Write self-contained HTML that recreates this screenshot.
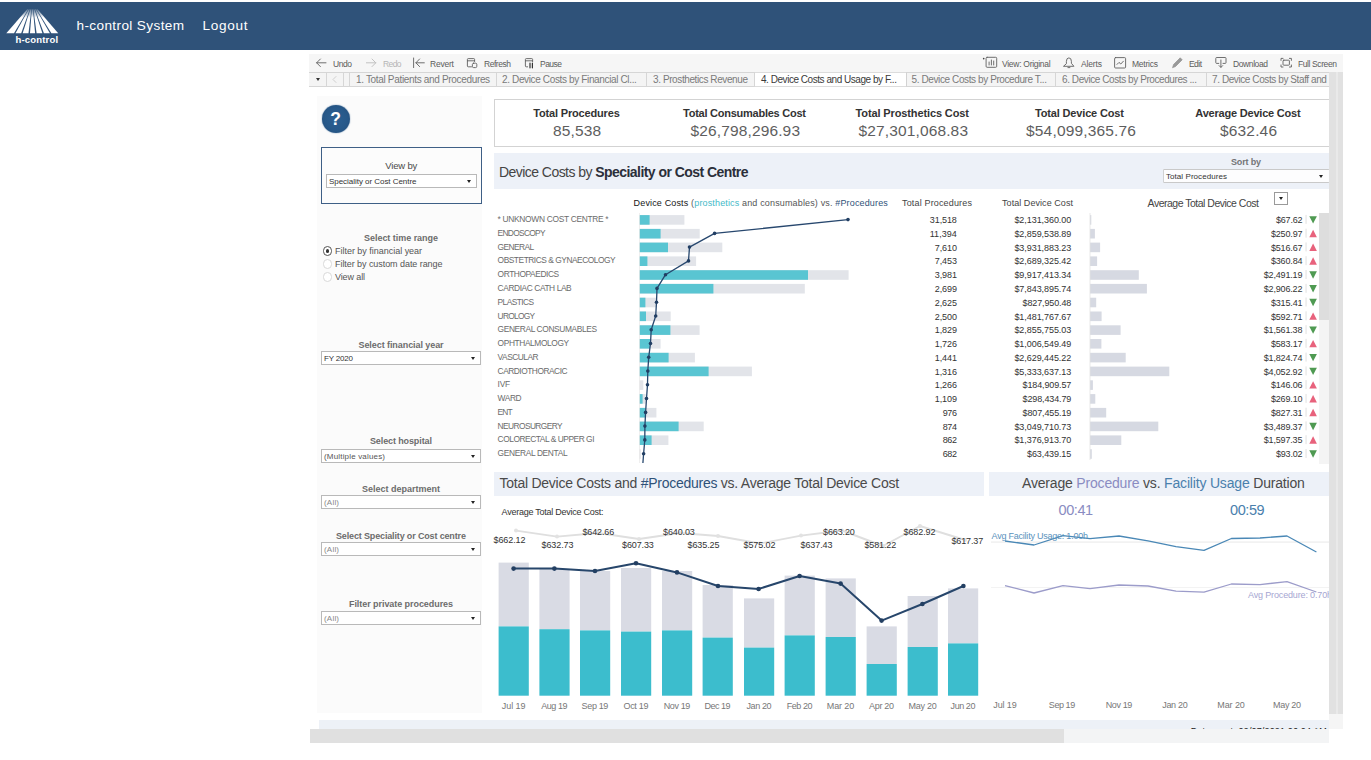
<!DOCTYPE html>
<html lang="en">
<head>
<meta charset="utf-8">
<title>h-control System</title>
<style>
html,body{margin:0;padding:0;background:#fff;}
body{width:1371px;height:760px;position:relative;overflow:hidden;font-family:"Liberation Sans",sans-serif;}
.a{position:absolute;box-sizing:border-box;}
.t{position:absolute;white-space:nowrap;line-height:1;transform:translateY(-50%);}
.t.c{transform:translate(-50%,-50%);}
.t.r{transform:translate(-100%,-50%);}
.sel{position:absolute;box-sizing:border-box;background:#fff;border:1px solid #b9b9b9;height:14px;}
.sel i{position:absolute;right:5px;top:5px;width:0;height:0;border-left:2.5px solid transparent;border-right:2.5px solid transparent;border-top:3.5px solid #222;}
.rad{position:absolute;box-sizing:border-box;width:9.6px;height:9.6px;border-radius:50%;border:1px solid #d9d9d9;background:#fff;}
.tab{position:absolute;box-sizing:border-box;top:72px;height:15px;background:#f4f4f4;border:1px solid #d6d6d6;border-left:none;}
svg{position:absolute;left:0;top:0;}
</style>
</head>
<body>
<!-- top navigation -->
<div class="a" style="left:0;top:2px;width:1371px;height:48px;background:#2f5279;"></div>
<svg width="70" height="50" viewBox="0 0 70 50">
  <defs>
    <linearGradient id="lg" x1="0" y1="0" x2="0" y2="1">
      <stop offset="0" stop-color="#fff" stop-opacity="0.25"/>
      <stop offset="0.35" stop-color="#fff" stop-opacity="1"/>
    </linearGradient>
  </defs>
  <g fill="url(#lg)"><path d="M27.20 9.3L28.25 9.3L14.0 33.2L6.3 33.2Z"/><path d="M28.75 9.3L29.80 9.3L21.2 33.2L15.5 33.2Z"/><path d="M30.30 9.3L31.35 9.3L28.5 33.2L22.7 33.2Z"/><path d="M31.85 9.3L32.90 9.3L35.1 33.2L30.0 33.2Z"/><path d="M33.40 9.3L34.45 9.3L42.4 33.2L36.6 33.2Z"/><path d="M34.95 9.3L36.00 9.3L49.9 33.2L43.9 33.2Z"/><path d="M36.50 9.3L37.55 9.3L58.2 33.2L51.4 33.2Z"/></g>
</svg>

<!-- tableau toolbar -->
<div class="a" style="left:309px;top:54px;width:1034px;height:18px;background:#f6f6f6;"></div>
<div class="a" style="left:309px;top:72px;width:1020px;height:15px;background:#fff;border-top:1px solid #dcdcdc;border-bottom:1px solid #dcdcdc;"></div>
<div class="tab" style="left:309px;width:18px;"></div>
<div class="tab" style="left:327px;width:17px;"></div>
<div class="tab" style="left:344px;width:6px;"></div>
<div class="tab" style="left:350px;width:147px;"></div>
<div class="tab" style="left:497px;width:150px;"></div>
<div class="tab" style="left:647px;width:108px;"></div>
<div class="tab" style="left:906px;width:150px;border-left:1px solid #d2d2d2;"></div>
<div class="tab" style="left:1056px;width:151px;"></div>
<div class="tab" style="left:1207px;width:122px;border-right:none;"></div>
<div class="a" style="left:315.5px;top:78px;width:0;height:0;border-left:2.5px solid transparent;border-right:2.5px solid transparent;border-top:3.5px solid #333;"></div>

<!-- dashboard frame -->
<div class="a" style="left:1329px;top:72px;width:14px;height:642px;background:#e1e1e1;z-index:5;"></div>
<div class="a" style="left:1335.5px;top:72px;width:2px;height:642px;background:#e9e9e9;z-index:6;"></div>
<div class="a" style="left:1329px;top:714px;width:14px;height:15px;background:#f5f5f5;"></div>
<div class="a" style="left:317px;top:96px;width:165px;height:617px;background:#fbfbfb;"></div>
<div class="a" style="left:321px;top:146.9px;width:161px;height:56.8px;border:1.4px solid #3e5f86;background:#fcfcfc;"></div>
<div class="a" style="left:321.5px;top:104.5px;width:28.5px;height:28.5px;border-radius:50%;background:radial-gradient(circle,#2b5f92 0%,#27598a 55%,#214b78 100%);box-shadow:0 0 1.2px #2a5a8a;"></div>

<div class="sel" style="left:326px;top:174.1px;width:150.8px;"><i></i></div>
<div class="sel" style="left:321.1px;top:351.0px;width:160px;"><i></i></div>
<div class="sel" style="left:321.1px;top:448.5px;width:160px;"><i></i></div>
<div class="sel" style="left:321.1px;top:495.0px;width:160px;"><i></i></div>
<div class="sel" style="left:321.1px;top:541.5px;width:160px;"><i></i></div>
<div class="sel" style="left:321.1px;top:610.5px;width:160px;"><i></i></div>
<div class="rad" style="left:322.5px;top:246.3px;border-color:#555;"></div>
<div class="a" style="left:325.6px;top:249.4px;width:3.8px;height:3.8px;border-radius:50%;background:#333;"></div>
<div class="rad" style="left:322.5px;top:259.4px;"></div>
<div class="rad" style="left:322.5px;top:272.4px;"></div>

<!-- KPI box -->
<div class="a" style="left:493.5px;top:99px;width:840px;height:48px;border:1px solid #d3d3d3;background:#fff;clip-path:inset(0 4.5px 0 0);"></div>
<!-- bands -->
<div class="a" style="left:493.5px;top:153px;width:835.5px;height:36px;background:#edf1f8;"></div>
<div class="sel" style="left:1163.4px;top:169.3px;width:170px;height:13.4px;clip-path:inset(0 4.5px 0 0);background:#fdfdfe;"><i style="right:9.5px;"></i></div>
<div class="a" style="left:493.5px;top:471.5px;width:490px;height:24.5px;background:#edf1f8;"></div>
<div class="a" style="left:989px;top:471.5px;width:340px;height:24.5px;background:#edf1f8;"></div>
<!-- small dropdown button -->
<div class="a" style="left:1274.3px;top:192px;width:14.2px;height:13.2px;border:1px solid #9a9a9a;background:#fff;"></div>
<div class="a" style="left:1279.1px;top:197.2px;width:0;height:0;border-left:2.3px solid transparent;border-right:2.3px solid transparent;border-top:3px solid #222;"></div>
<!-- inner scrollbar -->
<div class="a" style="left:1318.5px;top:213px;width:10.5px;height:251px;background:#f4f4f4;"></div>
<div class="a" style="left:1318.5px;top:213px;width:10.5px;height:106.5px;background:#dddddd;"></div>
<!-- footer -->
<div class="a" style="left:319px;top:719.5px;width:1010px;height:9.5px;background:#edf1f7;overflow:hidden;">
  <span style="position:absolute;right:2px;top:6.5px;font-size:9px;line-height:10px;color:#222;white-space:nowrap;letter-spacing:0.15px;">Data as at: 09/07/2021 06:04 AM</span>
</div>
<div class="a" style="left:309.5px;top:729px;width:1019.5px;height:13.5px;background:#f3f4f5;"></div>
<div class="a" style="left:309.5px;top:729px;width:754px;height:13.5px;background:#e0e0e0;"></div>

<svg width="1371" height="760" viewBox="0 0 1371 760">
<!-- toolbar icons -->
<g fill="none" stroke="#606060" stroke-width="0.9" stroke-linecap="round" stroke-linejoin="round">
  <path d="M326 62.8H316.6M320.4 59l-3.8 3.8 3.8 3.8"/>
  <path d="M413.6 58v9.6M424.3 62.8H416M419.6 59l-3.7 3.8 3.7 3.8"/>
  <path d="M471.5 66.8H468.2Q467.4 66.8 467.4 66V59.4Q467.4 58.6 468.2 58.6H473.8Q474.6 58.6 474.6 59.4V61.5M467.4 60.8H474.6"/>
  <rect x="472.4" y="63.2" width="4.4" height="4.4" rx="1.2"/>
  <path d="M527.6 66.8H526.2Q525.4 66.8 525.4 66V59.4Q525.4 58.6 526.2 58.6H531.8Q532.6 58.6 532.6 59.4V61.6M525.4 60.8H532.6"/>
  <path d="M530 63.2v4.6M532.4 63.2v4.6" stroke="#333" stroke-width="1.2"/>
  <rect x="986.1" y="57.3" width="10.6" height="10" rx="1"/>
  <path d="M989.1 65v-3M991.4 65v-5M993.700 65v-4"/>
  <path d="M1063.900 66.300H1073.900L1071.400 63.300V61.400Q1071.400 57.900 1068.900 57.900Q1066.400 57.900 1066.400 61.400V63.300ZM1067.900 67.600H1069.900"/>
  <rect x="1114.6" y="57.6" width="11" height="10.4" rx="1"/>
  <path d="M1117 64.4l2-2 1.8 1.6 2.6-2.8"/>
  <path d="M1172.6 67.4l1-3 6.6-6.6 2 2-6.600 6.600z" fill="#999" stroke="#888" stroke-width="0.6"/>
  <path d="M1218.800 63.400H1216.600Q1215.800 63.400 1215.800 62.600V58.300Q1215.800 57.500 1216.600 57.500H1225.200Q1226 57.500 1226 58.300V62.600Q1226 63.400 1225.200 63.400H1223"/>
  <path d="M1220.900 60v7.200M1219.100 65.600l1.800 1.800 1.800-1.800"/>
  <path d="M1281 60.400V58.400H1283M1289.400 58.400H1291.400V60.400M1291.400 65V67H1289.400M1283 67H1281V65"/>
  <rect x="1283" y="60.200" width="6.400" height="5" rx="0.800"/>
</g>
<g fill="none" stroke="#c2c2c2" stroke-width="1" stroke-linecap="round" stroke-linejoin="round">
  <path d="M366.400 62.800H375.800M372 59l3.800 3.800-3.800 3.800"/>
  <path d="M336 76.500l-3 3 3 3" stroke="#d0d0d0"/>
</g>
<circle cx="983.700" cy="58.600" r="0.850" fill="#444"/>
<rect x="639.4" y="215.1" width="45.0" height="9.6" fill="#e2e4e9"/>
<rect x="639.4" y="215.1" width="10.2" height="9.6" fill="#59c5d2"/>
<rect x="1090" y="215.1" width="1.3" height="9.6" fill="#d6d9e2"/>
<rect x="1305.6" y="214.9" width="0.9" height="9" fill="#ddd"/>
<path d="M1309.3 216.2h7.6l-3.8 7.4z" fill="#4f9a52"/>
<rect x="639.4" y="228.9" width="60.3" height="9.6" fill="#e2e4e9"/>
<rect x="639.4" y="228.9" width="21.2" height="9.6" fill="#59c5d2"/>
<rect x="1090" y="228.9" width="4.9" height="9.6" fill="#d6d9e2"/>
<rect x="1305.6" y="228.7" width="0.9" height="9" fill="#ddd"/>
<path d="M1309.3 237.2h7.6l-3.8 -7.4z" fill="#e8627c"/>
<rect x="639.4" y="242.6" width="82.9" height="9.6" fill="#e2e4e9"/>
<rect x="639.4" y="242.6" width="28.6" height="9.6" fill="#59c5d2"/>
<rect x="1090" y="242.6" width="10.1" height="9.6" fill="#d6d9e2"/>
<rect x="1305.6" y="242.4" width="0.9" height="9" fill="#ddd"/>
<path d="M1309.3 250.9h7.6l-3.8 -7.4z" fill="#e8627c"/>
<rect x="639.4" y="256.4" width="56.7" height="9.6" fill="#e2e4e9"/>
<rect x="639.4" y="256.4" width="8.0" height="9.6" fill="#59c5d2"/>
<rect x="1090" y="256.4" width="7.1" height="9.6" fill="#d6d9e2"/>
<rect x="1305.6" y="256.2" width="0.9" height="9" fill="#ddd"/>
<path d="M1309.3 264.7h7.6l-3.8 -7.4z" fill="#e8627c"/>
<rect x="639.4" y="270.2" width="209.2" height="9.6" fill="#e2e4e9"/>
<rect x="639.4" y="270.2" width="168.6" height="9.6" fill="#59c5d2"/>
<rect x="1090" y="270.2" width="48.8" height="9.6" fill="#d6d9e2"/>
<rect x="1305.6" y="270.0" width="0.9" height="9" fill="#ddd"/>
<path d="M1309.3 271.3h7.6l-3.8 7.4z" fill="#4f9a52"/>
<rect x="639.4" y="283.9" width="165.4" height="9.6" fill="#e2e4e9"/>
<rect x="639.4" y="283.9" width="74.0" height="9.6" fill="#59c5d2"/>
<rect x="1090" y="283.9" width="56.9" height="9.6" fill="#d6d9e2"/>
<rect x="1305.6" y="283.8" width="0.9" height="9" fill="#ddd"/>
<path d="M1309.3 285.1h7.6l-3.8 7.4z" fill="#4f9a52"/>
<rect x="639.4" y="297.7" width="17.5" height="9.6" fill="#e2e4e9"/>
<rect x="639.4" y="297.7" width="6.0" height="9.6" fill="#59c5d2"/>
<rect x="1090" y="297.7" width="6.2" height="9.6" fill="#d6d9e2"/>
<rect x="1305.6" y="297.5" width="0.9" height="9" fill="#ddd"/>
<path d="M1309.3 298.8h7.6l-3.8 7.4z" fill="#4f9a52"/>
<rect x="639.4" y="311.5" width="31.3" height="9.6" fill="#e2e4e9"/>
<rect x="639.4" y="311.5" width="6.6" height="9.6" fill="#59c5d2"/>
<rect x="1090" y="311.5" width="11.6" height="9.6" fill="#d6d9e2"/>
<rect x="1305.6" y="311.3" width="0.9" height="9" fill="#ddd"/>
<path d="M1309.3 319.8h7.6l-3.8 -7.4z" fill="#e8627c"/>
<rect x="639.4" y="325.3" width="60.2" height="9.6" fill="#e2e4e9"/>
<rect x="639.4" y="325.3" width="31.0" height="9.6" fill="#59c5d2"/>
<rect x="1090" y="325.3" width="30.6" height="9.6" fill="#d6d9e2"/>
<rect x="1305.6" y="325.1" width="0.9" height="9" fill="#ddd"/>
<path d="M1309.3 326.4h7.6l-3.8 7.4z" fill="#4f9a52"/>
<rect x="639.4" y="339.0" width="21.2" height="9.6" fill="#e2e4e9"/>
<rect x="639.4" y="339.0" width="10.6" height="9.6" fill="#59c5d2"/>
<rect x="1090" y="339.0" width="11.4" height="9.6" fill="#d6d9e2"/>
<rect x="1305.6" y="338.8" width="0.9" height="9" fill="#ddd"/>
<path d="M1309.3 347.3h7.6l-3.8 -7.4z" fill="#e8627c"/>
<rect x="639.4" y="352.8" width="55.5" height="9.6" fill="#e2e4e9"/>
<rect x="639.4" y="352.8" width="29.2" height="9.6" fill="#59c5d2"/>
<rect x="1090" y="352.8" width="35.7" height="9.6" fill="#d6d9e2"/>
<rect x="1305.6" y="352.6" width="0.9" height="9" fill="#ddd"/>
<path d="M1309.3 353.9h7.6l-3.8 7.4z" fill="#4f9a52"/>
<rect x="639.4" y="366.6" width="112.5" height="9.6" fill="#e2e4e9"/>
<rect x="639.4" y="366.6" width="69.2" height="9.6" fill="#59c5d2"/>
<rect x="1090" y="366.6" width="79.3" height="9.6" fill="#d6d9e2"/>
<rect x="1305.6" y="366.4" width="0.9" height="9" fill="#ddd"/>
<path d="M1309.3 367.7h7.6l-3.8 7.4z" fill="#4f9a52"/>
<rect x="639.4" y="380.3" width="3.9" height="9.6" fill="#e2e4e9"/>
<rect x="1090" y="380.3" width="2.9" height="9.6" fill="#d6d9e2"/>
<rect x="1305.6" y="380.1" width="0.9" height="9" fill="#ddd"/>
<path d="M1309.3 388.6h7.6l-3.8 -7.4z" fill="#e8627c"/>
<rect x="639.4" y="394.1" width="6.3" height="9.6" fill="#e2e4e9"/>
<rect x="639.4" y="394.1" width="3.2" height="9.6" fill="#59c5d2"/>
<rect x="1090" y="394.1" width="5.3" height="9.6" fill="#d6d9e2"/>
<rect x="1305.6" y="393.9" width="0.9" height="9" fill="#ddd"/>
<path d="M1309.3 402.4h7.6l-3.8 -7.4z" fill="#e8627c"/>
<rect x="639.4" y="407.9" width="17.0" height="9.6" fill="#e2e4e9"/>
<rect x="639.4" y="407.9" width="6.2" height="9.6" fill="#59c5d2"/>
<rect x="1090" y="407.9" width="16.2" height="9.6" fill="#d6d9e2"/>
<rect x="1305.6" y="407.7" width="0.9" height="9" fill="#ddd"/>
<path d="M1309.3 416.2h7.6l-3.8 -7.4z" fill="#e8627c"/>
<rect x="639.4" y="421.6" width="64.3" height="9.6" fill="#e2e4e9"/>
<rect x="639.4" y="421.6" width="39.2" height="9.6" fill="#59c5d2"/>
<rect x="1090" y="421.6" width="68.3" height="9.6" fill="#d6d9e2"/>
<rect x="1305.6" y="421.4" width="0.9" height="9" fill="#ddd"/>
<path d="M1309.3 422.8h7.6l-3.8 7.4z" fill="#4f9a52"/>
<rect x="639.4" y="435.4" width="29.0" height="9.6" fill="#e2e4e9"/>
<rect x="639.4" y="435.4" width="12.2" height="9.6" fill="#59c5d2"/>
<rect x="1090" y="435.4" width="31.3" height="9.6" fill="#d6d9e2"/>
<rect x="1305.6" y="435.2" width="0.9" height="9" fill="#ddd"/>
<path d="M1309.3 443.7h7.6l-3.8 -7.4z" fill="#e8627c"/>
<rect x="639.4" y="449.2" width="1.3" height="9.6" fill="#e2e4e9"/>
<rect x="1090" y="449.2" width="1.8" height="9.6" fill="#d6d9e2"/>
<rect x="1305.6" y="449.0" width="0.9" height="9" fill="#ddd"/>
<path d="M1309.3 450.3h7.6l-3.8 7.4z" fill="#4f9a52"/>
<rect x="1089.6" y="213" width="0.8" height="247" fill="#e4e4e4"/>
<rect x="639" y="213" width="0.7" height="250" fill="#e8e8e8"/>
<polyline fill="none" stroke="#27476e" stroke-width="1.3" stroke-linejoin="round" points="848.0,219.6 714.6,233.4 689.5,247.1 688.5,260.9 665.5,274.7 657.0,288.4 656.5,302.2 655.7,316.0 651.2,329.8 650.5,343.5 648.7,357.3 647.8,371.1 647.5,384.8 646.5,398.6 645.6,412.4 644.9,426.1 644.8,439.9 643.6,453.7 642.9,463.0"/>
<circle cx="848.0" cy="219.6" r="1.8" fill="#213e63"/>
<circle cx="714.6" cy="233.4" r="1.8" fill="#213e63"/>
<circle cx="689.5" cy="247.1" r="1.8" fill="#213e63"/>
<circle cx="688.5" cy="260.9" r="1.8" fill="#213e63"/>
<circle cx="665.5" cy="274.7" r="1.8" fill="#213e63"/>
<circle cx="657.0" cy="288.4" r="1.8" fill="#213e63"/>
<circle cx="656.5" cy="302.2" r="1.8" fill="#213e63"/>
<circle cx="655.7" cy="316.0" r="1.8" fill="#213e63"/>
<circle cx="651.2" cy="329.8" r="1.8" fill="#213e63"/>
<circle cx="650.5" cy="343.5" r="1.8" fill="#213e63"/>
<circle cx="648.7" cy="357.3" r="1.8" fill="#213e63"/>
<circle cx="647.8" cy="371.1" r="1.8" fill="#213e63"/>
<circle cx="647.5" cy="384.8" r="1.8" fill="#213e63"/>
<circle cx="646.5" cy="398.6" r="1.8" fill="#213e63"/>
<circle cx="645.6" cy="412.4" r="1.8" fill="#213e63"/>
<circle cx="644.9" cy="426.1" r="1.8" fill="#213e63"/>
<circle cx="644.8" cy="439.9" r="1.8" fill="#213e63"/>
<circle cx="643.6" cy="453.7" r="1.8" fill="#213e63"/>
<polyline fill="none" stroke="#dfdfdf" stroke-width="1.9" stroke-linejoin="round" points="516,530.6 557,536.6 598,533 639,539 680,533 718,536 760,543.5 801,535.6 842,530.5 883,546 920,526 965,540"/>
<circle cx="516" cy="530.6" r="2" fill="#e2e2e2"/>
<circle cx="557" cy="536.6" r="2" fill="#e2e2e2"/>
<circle cx="598" cy="533" r="2" fill="#e2e2e2"/>
<circle cx="639" cy="539" r="2" fill="#e2e2e2"/>
<circle cx="680" cy="533" r="2" fill="#e2e2e2"/>
<circle cx="718" cy="536" r="2" fill="#e2e2e2"/>
<circle cx="760" cy="543.5" r="2" fill="#e2e2e2"/>
<circle cx="801" cy="535.6" r="2" fill="#e2e2e2"/>
<circle cx="842" cy="530.5" r="2" fill="#e2e2e2"/>
<circle cx="883" cy="546" r="2" fill="#e2e2e2"/>
<circle cx="920" cy="526" r="2" fill="#e2e2e2"/>
<circle cx="965" cy="540" r="2" fill="#e2e2e2"/>
<rect x="498.6" y="562.6" width="30.2" height="63.8" fill="#d9dbe4"/>
<rect x="498.6" y="626.4" width="30.2" height="69.3" fill="#3cbdcd"/>
<rect x="539.4" y="569" width="30.2" height="60.2" fill="#d9dbe4"/>
<rect x="539.4" y="629.2" width="30.2" height="66.5" fill="#3cbdcd"/>
<rect x="580" y="571" width="30.2" height="59.4" fill="#d9dbe4"/>
<rect x="580" y="630.4" width="30.2" height="65.3" fill="#3cbdcd"/>
<rect x="621" y="568" width="30.2" height="63.6" fill="#d9dbe4"/>
<rect x="621" y="631.6" width="30.2" height="64.1" fill="#3cbdcd"/>
<rect x="662" y="571" width="30.2" height="59.4" fill="#d9dbe4"/>
<rect x="662" y="630.4" width="30.2" height="65.3" fill="#3cbdcd"/>
<rect x="702.6" y="585" width="30.2" height="52.6" fill="#d9dbe4"/>
<rect x="702.6" y="637.6" width="30.2" height="58.1" fill="#3cbdcd"/>
<rect x="744" y="598.4" width="30.2" height="49.2" fill="#d9dbe4"/>
<rect x="744" y="647.6" width="30.2" height="48.1" fill="#3cbdcd"/>
<rect x="784.6" y="575.6" width="30.2" height="59.8" fill="#d9dbe4"/>
<rect x="784.6" y="635.4" width="30.2" height="60.3" fill="#3cbdcd"/>
<rect x="825.6" y="578.4" width="30.2" height="58.6" fill="#d9dbe4"/>
<rect x="825.6" y="637" width="30.2" height="58.7" fill="#3cbdcd"/>
<rect x="866.6" y="626.4" width="30.2" height="37.6" fill="#d9dbe4"/>
<rect x="866.6" y="664" width="30.2" height="31.7" fill="#3cbdcd"/>
<rect x="907.6" y="596" width="30.2" height="51.0" fill="#d9dbe4"/>
<rect x="907.6" y="647" width="30.2" height="48.7" fill="#3cbdcd"/>
<rect x="948" y="588.4" width="30.2" height="55.0" fill="#d9dbe4"/>
<rect x="948" y="643.4" width="30.2" height="52.3" fill="#3cbdcd"/>
<polyline fill="none" stroke="#27466b" stroke-width="2" stroke-linejoin="round" points="513.6,568.6 554.4,568.6 595,571 636,563.2 677,572.4 718,586 758.6,589 799.6,576 840.6,583.6 881.6,620.6 922.4,604 963.4,586"/>
<circle cx="513.6" cy="568.6" r="2.3" fill="#233f62"/>
<circle cx="554.4" cy="568.6" r="2.3" fill="#233f62"/>
<circle cx="595" cy="571" r="2.3" fill="#233f62"/>
<circle cx="636" cy="563.2" r="2.3" fill="#233f62"/>
<circle cx="677" cy="572.4" r="2.3" fill="#233f62"/>
<circle cx="718" cy="586" r="2.3" fill="#233f62"/>
<circle cx="758.6" cy="589" r="2.3" fill="#233f62"/>
<circle cx="799.6" cy="576" r="2.3" fill="#233f62"/>
<circle cx="840.6" cy="583.6" r="2.3" fill="#233f62"/>
<circle cx="881.6" cy="620.6" r="2.3" fill="#233f62"/>
<circle cx="922.4" cy="604" r="2.3" fill="#233f62"/>
<circle cx="963.4" cy="586" r="2.3" fill="#233f62"/>
<rect x="991" y="541.6" width="338" height="0.9" fill="#e6e6e6"/>
<rect x="991" y="587" width="338" height="0.8" fill="#f0f0f0"/>
<polyline fill="none" stroke="#4a88b6" stroke-width="1.3" stroke-linejoin="round" points="1005,541 1034,545 1063,535.6 1090,538.6 1119,536 1148,540.8 1176,546.6 1204,550.4 1231.4,538.5 1260,538 1287,536 1316.4,552"/>
<polyline fill="none" stroke="#9c9cca" stroke-width="1.3" stroke-linejoin="round" points="1005,585.6 1034,593 1063,585.6 1090,588.6 1119,585 1148,586 1176,591.2 1204,592.2 1231.4,584 1260,584.6 1287,581.6 1316.4,592"/>
</svg>
<span id="t0" class="t" style="top:25.6px;font-size:13.6px;color:#fff;letter-spacing:0.37px;left:76.5px;">h-control System</span>
<span id="t1" class="t" style="top:25.6px;font-size:13.6px;color:#fff;letter-spacing:0.68px;left:202.5px;">Logout</span>
<span id="t2" class="t" style="top:39.6px;font-size:9.5px;color:#fff;font-weight:700;letter-spacing:0.17px;left:15.5px;">h-control</span>
<span id="t3" class="t" style="top:63.8px;font-size:8.5px;color:#5c5c5c;letter-spacing:-0.44px;left:333.0px;">Undo</span>
<span id="t4" class="t" style="top:63.8px;font-size:8.5px;color:#b5b5b5;letter-spacing:-0.61px;left:383.0px;">Redo</span>
<span id="t5" class="t" style="top:63.8px;font-size:8.5px;color:#5c5c5c;letter-spacing:-0.21px;left:430.0px;">Revert</span>
<span id="t6" class="t" style="top:63.8px;font-size:8.5px;color:#5c5c5c;letter-spacing:-0.46px;left:484.0px;">Refresh</span>
<span id="t7" class="t" style="top:63.8px;font-size:8.5px;color:#5c5c5c;letter-spacing:-0.53px;left:540.0px;">Pause</span>
<span id="t8" class="t" style="top:63.8px;font-size:8.5px;color:#5c5c5c;letter-spacing:-0.28px;left:1002.0px;">View: Original</span>
<span id="t9" class="t" style="top:63.8px;font-size:8.5px;color:#5c5c5c;letter-spacing:-0.15px;left:1081.0px;">Alerts</span>
<span id="t10" class="t" style="top:63.8px;font-size:8.5px;color:#5c5c5c;letter-spacing:-0.23px;left:1132.0px;">Metrics</span>
<span id="t11" class="t" style="top:63.8px;font-size:8.5px;color:#5c5c5c;letter-spacing:-0.55px;left:1189.0px;">Edit</span>
<span id="t12" class="t" style="top:63.8px;font-size:8.5px;color:#5c5c5c;letter-spacing:-0.40px;left:1233.0px;">Download</span>
<span id="t13" class="t" style="top:63.8px;font-size:8.5px;color:#5c5c5c;letter-spacing:-0.40px;left:1298.0px;">Full Screen</span>
<span id="t14" class="t" style="top:80.2px;font-size:10px;color:#7a7a7a;letter-spacing:-0.33px;left:356.0px;">1. Total Patients and Procedures</span>
<span id="t15" class="t" style="top:80.2px;font-size:10px;color:#7a7a7a;letter-spacing:-0.36px;left:502.0px;">2. Device Costs by Financial Cl...</span>
<span id="t16" class="t" style="top:80.2px;font-size:10px;color:#7a7a7a;letter-spacing:-0.40px;left:653.0px;">3. Prosthetics Revenue</span>
<span id="t17" class="t" style="top:80.2px;font-size:10px;color:#3a3a3a;letter-spacing:-0.46px;left:761.0px;">4. Device Costs and Usage by F...</span>
<span id="t18" class="t" style="top:80.2px;font-size:10px;color:#7a7a7a;letter-spacing:-0.40px;left:911.6px;">5. Device Costs by Procedure T...</span>
<span id="t19" class="t" style="top:80.2px;font-size:10px;color:#7a7a7a;letter-spacing:-0.42px;left:1062.0px;">6. Device Costs by Procedures ...</span>
<span id="t20" class="t" style="top:80.2px;font-size:10px;color:#7a7a7a;letter-spacing:-0.41px;left:1212.0px;">7. Device Costs by Staff and</span>
<span id="t21" class="t c" style="top:113.4px;font-size:11px;color:#333;font-weight:700;letter-spacing:-0.16px;left:576.4px;">Total Procedures</span>
<span id="t22" class="t c" style="top:131.0px;font-size:15.5px;color:#5e5e5e;letter-spacing:0.12px;left:577.1px;">85,538</span>
<span id="t23" class="t c" style="top:113.4px;font-size:11px;color:#333;font-weight:700;letter-spacing:-0.25px;left:744.4px;">Total Consumables Cost</span>
<span id="t24" class="t c" style="top:131.0px;font-size:15.5px;color:#5e5e5e;letter-spacing:0.14px;left:745.3px;">$26,798,296.93</span>
<span id="t25" class="t c" style="top:113.4px;font-size:11px;color:#333;font-weight:700;letter-spacing:-0.12px;left:912.2px;">Total Prosthetics Cost</span>
<span id="t26" class="t c" style="top:131.0px;font-size:15.5px;color:#5e5e5e;letter-spacing:0.14px;left:913.3px;">$27,301,068.83</span>
<span id="t27" class="t c" style="top:113.4px;font-size:11px;color:#333;font-weight:700;letter-spacing:-0.16px;left:1079.4px;">Total Device Cost</span>
<span id="t28" class="t c" style="top:131.0px;font-size:15.5px;color:#5e5e5e;letter-spacing:0.17px;left:1081.1px;">$54,099,365.76</span>
<span id="t29" class="t c" style="top:113.4px;font-size:11px;color:#333;font-weight:700;letter-spacing:-0.21px;left:1247.9px;">Average Device Cost</span>
<span id="t30" class="t c" style="top:131.0px;font-size:15.5px;color:#5e5e5e;letter-spacing:0.16px;left:1248.6px;">$632.46</span>
<span id="t31" class="t" style="top:171.6px;font-size:14px;color:#444;letter-spacing:-0.55px;left:499.0px;">Device Costs by <b style="color:#2b2f3a">Speciality or Cost Centre</b></span>
<span id="t32" class="t" style="top:483.4px;font-size:14px;color:#4a4a4a;letter-spacing:-0.26px;left:499.6px;">Total Device Costs and <span style="color:#2f5279">#Procedures</span> vs. Average Total Device Cost</span>
<span id="t33" class="t" style="top:483.4px;font-size:14px;color:#4a4a4a;letter-spacing:-0.18px;left:1022.0px;">Average <span style="color:#8a8cc2">Procedure</span> vs. <span style="color:#4a80ad">Facility Usage</span> Duration</span>
<span id="t34" class="t c" style="top:162.3px;font-size:9px;color:#444;font-weight:700;letter-spacing:-0.17px;left:1245.9px;opacity:.72;">Sort by</span>
<span id="t35" class="t" style="top:177.2px;font-size:8px;color:#333;letter-spacing:0.06px;left:1166.0px;">Total Procedures</span>
<span id="t36" class="t c" style="top:166.0px;font-size:9.5px;color:#4a4a4a;letter-spacing:-0.18px;left:401.2px;">View by</span>
<span id="t37" class="t c" style="top:238.3px;font-size:9px;color:#444;font-weight:700;letter-spacing:-0.03px;left:401.0px;opacity:.78;">Select time range</span>
<span id="t38" class="t c" style="top:345.0px;font-size:9px;color:#444;font-weight:700;letter-spacing:-0.07px;left:401.0px;opacity:.78;">Select financial year</span>
<span id="t39" class="t c" style="top:441.4px;font-size:9px;color:#444;font-weight:700;letter-spacing:-0.11px;left:400.9px;opacity:.78;">Select hospital</span>
<span id="t40" class="t c" style="top:489.0px;font-size:9px;color:#444;font-weight:700;left:401.0px;opacity:.78;">Select department</span>
<span id="t41" class="t c" style="top:535.6px;font-size:9px;color:#444;font-weight:700;letter-spacing:-0.15px;left:400.9px;opacity:.78;">Select Speciality or Cost centre</span>
<span id="t42" class="t c" style="top:604.4px;font-size:9px;color:#444;font-weight:700;letter-spacing:-0.06px;left:401.0px;opacity:.78;">Filter private procedures</span>
<span id="t43" class="t" style="top:182.4px;font-size:8px;color:#333;letter-spacing:-0.04px;left:329.0px;">Speciality or Cost Centre</span>
<span id="t44" class="t" style="top:358.9px;font-size:8px;color:#333;letter-spacing:-0.18px;left:324.0px;">FY 2020</span>
<span id="t45" class="t" style="top:456.5px;font-size:8px;color:#555;letter-spacing:0.17px;left:324.0px;">(Multiple values)</span>
<span id="t46" class="t" style="top:502.9px;font-size:8px;color:#888;letter-spacing:0.20px;left:324.0px;">(All)</span>
<span id="t47" class="t" style="top:549.6px;font-size:8px;color:#888;letter-spacing:0.20px;left:324.0px;">(All)</span>
<span id="t48" class="t" style="top:618.6px;font-size:8px;color:#888;letter-spacing:0.20px;left:324.0px;">(All)</span>
<span id="t49" class="t" style="top:251.2px;font-size:9px;color:#555;letter-spacing:-0.02px;left:335.0px;">Filter by financial year</span>
<span id="t50" class="t" style="top:264.3px;font-size:9px;color:#555;letter-spacing:-0.06px;left:335.0px;">Filter by custom date range</span>
<span id="t51" class="t" style="top:277.3px;font-size:9px;color:#555;letter-spacing:-0.12px;left:335.0px;">View all</span>
<span id="t52" class="t" style="top:203.0px;font-size:9px;color:#555;letter-spacing:0.15px;left:633.6px;"><span style="color:#161616">Device Costs</span> (<span style="color:#45b9c8">prosthetics</span> and consumables) vs. <span style="color:#2f5279">#Procedures</span></span>
<span id="t53" class="t" style="top:203.0px;font-size:9px;color:#444;letter-spacing:0.16px;left:902.0px;">Total Procedures</span>
<span id="t54" class="t" style="top:203.0px;font-size:9px;color:#444;letter-spacing:0.06px;left:1002.0px;">Total Device Cost</span>
<span id="t55" class="t" style="top:203.0px;font-size:10.5px;color:#444;letter-spacing:-0.50px;left:1147.6px;">Average Total Device Cost</span>
<span id="t56" class="t" style="top:219.1px;font-size:8.4px;color:#6b6b6b;letter-spacing:-0.30px;left:497.6px;">* UNKNOWN COST CENTRE *</span>
<span id="t57" class="t r" style="top:220.1px;font-size:9px;color:#333;letter-spacing:-0.09px;left:956.8px;">31,518</span>
<span id="t58" class="t r" style="top:220.1px;font-size:9px;color:#333;letter-spacing:-0.06px;left:1071.2px;">$2,131,360.00</span>
<span id="t59" class="t r" style="top:220.1px;font-size:9px;color:#333;letter-spacing:-0.21px;left:1302.3px;">$67.62</span>
<span id="t60" class="t" style="top:232.9px;font-size:8.4px;color:#6b6b6b;letter-spacing:-0.69px;left:497.6px;">ENDOSCOPY</span>
<span id="t61" class="t r" style="top:233.9px;font-size:9px;color:#333;letter-spacing:0.05px;left:956.9px;">11,394</span>
<span id="t62" class="t r" style="top:233.9px;font-size:9px;color:#333;letter-spacing:-0.06px;left:1071.2px;">$2,859,538.89</span>
<span id="t63" class="t r" style="top:233.9px;font-size:9px;color:#333;letter-spacing:-0.17px;left:1302.3px;">$250.97</span>
<span id="t64" class="t" style="top:246.6px;font-size:8.4px;color:#6b6b6b;letter-spacing:-0.59px;left:497.6px;">GENERAL</span>
<span id="t65" class="t r" style="top:247.6px;font-size:9px;color:#333;letter-spacing:-0.11px;left:956.8px;">7,610</span>
<span id="t66" class="t r" style="top:247.6px;font-size:9px;color:#333;letter-spacing:-0.06px;left:1071.2px;">$3,931,883.23</span>
<span id="t67" class="t r" style="top:247.6px;font-size:9px;color:#333;letter-spacing:-0.17px;left:1302.3px;">$516.67</span>
<span id="t68" class="t" style="top:260.4px;font-size:8.4px;color:#6b6b6b;letter-spacing:-0.47px;left:497.6px;">OBSTETRICS &amp; GYNAECOLOGY</span>
<span id="t69" class="t r" style="top:261.4px;font-size:9px;color:#333;letter-spacing:-0.11px;left:956.8px;">7,453</span>
<span id="t70" class="t r" style="top:261.4px;font-size:9px;color:#333;letter-spacing:-0.06px;left:1071.2px;">$2,689,325.42</span>
<span id="t71" class="t r" style="top:261.4px;font-size:9px;color:#333;letter-spacing:-0.17px;left:1302.3px;">$360.84</span>
<span id="t72" class="t" style="top:274.2px;font-size:8.4px;color:#6b6b6b;letter-spacing:-0.43px;left:497.6px;">ORTHOPAEDICS</span>
<span id="t73" class="t r" style="top:275.2px;font-size:9px;color:#333;letter-spacing:-0.11px;left:956.8px;">3,981</span>
<span id="t74" class="t r" style="top:275.2px;font-size:9px;color:#333;letter-spacing:-0.06px;left:1071.2px;">$9,917,413.34</span>
<span id="t75" class="t r" style="top:275.2px;font-size:9px;color:#333;letter-spacing:-0.16px;left:1302.3px;">$2,491.19</span>
<span id="t76" class="t" style="top:287.9px;font-size:8.4px;color:#6b6b6b;letter-spacing:-0.42px;left:497.6px;">CARDIAC CATH LAB</span>
<span id="t77" class="t r" style="top:288.9px;font-size:9px;color:#333;letter-spacing:-0.11px;left:956.8px;">2,699</span>
<span id="t78" class="t r" style="top:288.9px;font-size:9px;color:#333;letter-spacing:-0.06px;left:1071.2px;">$7,843,895.74</span>
<span id="t79" class="t r" style="top:288.9px;font-size:9px;color:#333;letter-spacing:-0.16px;left:1302.3px;">$2,906.22</span>
<span id="t80" class="t" style="top:301.7px;font-size:8.4px;color:#6b6b6b;letter-spacing:-0.57px;left:497.6px;">PLASTICS</span>
<span id="t81" class="t r" style="top:302.7px;font-size:9px;color:#333;letter-spacing:-0.11px;left:956.8px;">2,625</span>
<span id="t82" class="t r" style="top:302.7px;font-size:9px;color:#333;letter-spacing:-0.13px;left:1071.2px;">$827,950.48</span>
<span id="t83" class="t r" style="top:302.7px;font-size:9px;color:#333;letter-spacing:-0.17px;left:1302.3px;">$315.41</span>
<span id="t84" class="t" style="top:315.5px;font-size:8.4px;color:#6b6b6b;letter-spacing:-0.73px;left:497.6px;">UROLOGY</span>
<span id="t85" class="t r" style="top:316.5px;font-size:9px;color:#333;letter-spacing:-0.11px;left:956.8px;">2,500</span>
<span id="t86" class="t r" style="top:316.5px;font-size:9px;color:#333;letter-spacing:-0.06px;left:1071.2px;">$1,481,767.67</span>
<span id="t87" class="t r" style="top:316.5px;font-size:9px;color:#333;letter-spacing:-0.17px;left:1302.3px;">$592.71</span>
<span id="t88" class="t" style="top:329.3px;font-size:8.4px;color:#6b6b6b;letter-spacing:-0.38px;left:497.6px;">GENERAL CONSUMABLES</span>
<span id="t89" class="t r" style="top:330.3px;font-size:9px;color:#333;letter-spacing:-0.11px;left:956.8px;">1,829</span>
<span id="t90" class="t r" style="top:330.3px;font-size:9px;color:#333;letter-spacing:-0.06px;left:1071.2px;">$2,855,755.03</span>
<span id="t91" class="t r" style="top:330.3px;font-size:9px;color:#333;letter-spacing:-0.16px;left:1302.3px;">$1,561.38</span>
<span id="t92" class="t" style="top:343.0px;font-size:8.4px;color:#6b6b6b;letter-spacing:-0.40px;left:497.6px;">OPHTHALMOLOGY</span>
<span id="t93" class="t r" style="top:344.0px;font-size:9px;color:#333;letter-spacing:-0.11px;left:956.8px;">1,726</span>
<span id="t94" class="t r" style="top:344.0px;font-size:9px;color:#333;letter-spacing:-0.06px;left:1071.2px;">$1,006,549.49</span>
<span id="t95" class="t r" style="top:344.0px;font-size:9px;color:#333;letter-spacing:-0.17px;left:1302.3px;">$583.17</span>
<span id="t96" class="t" style="top:356.8px;font-size:8.4px;color:#6b6b6b;letter-spacing:-0.50px;left:497.6px;">VASCULAR</span>
<span id="t97" class="t r" style="top:357.8px;font-size:9px;color:#333;letter-spacing:-0.11px;left:956.8px;">1,441</span>
<span id="t98" class="t r" style="top:357.8px;font-size:9px;color:#333;letter-spacing:-0.06px;left:1071.2px;">$2,629,445.22</span>
<span id="t99" class="t r" style="top:357.8px;font-size:9px;color:#333;letter-spacing:-0.16px;left:1302.3px;">$1,824.74</span>
<span id="t100" class="t" style="top:370.6px;font-size:8.4px;color:#6b6b6b;letter-spacing:-0.49px;left:497.6px;">CARDIOTHORACIC</span>
<span id="t101" class="t r" style="top:371.6px;font-size:9px;color:#333;letter-spacing:-0.11px;left:956.8px;">1,316</span>
<span id="t102" class="t r" style="top:371.6px;font-size:9px;color:#333;letter-spacing:-0.06px;left:1071.2px;">$5,333,637.13</span>
<span id="t103" class="t r" style="top:371.6px;font-size:9px;color:#333;letter-spacing:-0.16px;left:1302.3px;">$4,052.92</span>
<span id="t104" class="t" style="top:384.3px;font-size:8.4px;color:#6b6b6b;letter-spacing:-0.27px;left:497.6px;">IVF</span>
<span id="t105" class="t r" style="top:385.3px;font-size:9px;color:#333;letter-spacing:-0.11px;left:956.8px;">1,266</span>
<span id="t106" class="t r" style="top:385.3px;font-size:9px;color:#333;letter-spacing:-0.13px;left:1071.2px;">$184,909.57</span>
<span id="t107" class="t r" style="top:385.3px;font-size:9px;color:#333;letter-spacing:-0.17px;left:1302.3px;">$146.06</span>
<span id="t108" class="t" style="top:398.1px;font-size:8.4px;color:#6b6b6b;letter-spacing:-0.43px;left:497.6px;">WARD</span>
<span id="t109" class="t r" style="top:399.1px;font-size:9px;color:#333;letter-spacing:-0.11px;left:956.8px;">1,109</span>
<span id="t110" class="t r" style="top:399.1px;font-size:9px;color:#333;letter-spacing:-0.13px;left:1071.2px;">$298,434.79</span>
<span id="t111" class="t r" style="top:399.1px;font-size:9px;color:#333;letter-spacing:-0.17px;left:1302.3px;">$269.10</span>
<span id="t112" class="t" style="top:411.9px;font-size:8.4px;color:#6b6b6b;letter-spacing:-0.88px;left:497.6px;">ENT</span>
<span id="t113" class="t r" style="top:412.9px;font-size:9px;color:#333;letter-spacing:-0.42px;left:956.5px;">976</span>
<span id="t114" class="t r" style="top:412.9px;font-size:9px;color:#333;letter-spacing:-0.13px;left:1071.2px;">$807,455.19</span>
<span id="t115" class="t r" style="top:412.9px;font-size:9px;color:#333;letter-spacing:-0.17px;left:1302.3px;">$827.31</span>
<span id="t116" class="t" style="top:425.6px;font-size:8.4px;color:#6b6b6b;letter-spacing:-0.59px;left:497.6px;">NEUROSURGERY</span>
<span id="t117" class="t r" style="top:426.6px;font-size:9px;color:#333;letter-spacing:-0.42px;left:956.5px;">874</span>
<span id="t118" class="t r" style="top:426.6px;font-size:9px;color:#333;letter-spacing:-0.06px;left:1071.2px;">$3,049,710.73</span>
<span id="t119" class="t r" style="top:426.6px;font-size:9px;color:#333;letter-spacing:-0.16px;left:1302.3px;">$3,489.37</span>
<span id="t120" class="t" style="top:439.4px;font-size:8.4px;color:#6b6b6b;letter-spacing:-0.46px;left:497.6px;">COLORECTAL &amp; UPPER GI</span>
<span id="t121" class="t r" style="top:440.4px;font-size:9px;color:#333;letter-spacing:-0.42px;left:956.5px;">862</span>
<span id="t122" class="t r" style="top:440.4px;font-size:9px;color:#333;letter-spacing:-0.06px;left:1071.2px;">$1,376,913.70</span>
<span id="t123" class="t r" style="top:440.4px;font-size:9px;color:#333;letter-spacing:-0.16px;left:1302.3px;">$1,597.35</span>
<span id="t124" class="t" style="top:453.2px;font-size:8.4px;color:#6b6b6b;letter-spacing:-0.34px;left:497.6px;">GENERAL DENTAL</span>
<span id="t125" class="t r" style="top:454.2px;font-size:9px;color:#333;letter-spacing:-0.42px;left:956.5px;">682</span>
<span id="t126" class="t r" style="top:454.2px;font-size:9px;color:#333;letter-spacing:-0.09px;left:1071.2px;">$63,439.15</span>
<span id="t127" class="t r" style="top:454.2px;font-size:9px;color:#333;letter-spacing:-0.21px;left:1302.3px;">$93.02</span>
<span id="t128" class="t" style="top:512.3px;font-size:9px;color:#333;letter-spacing:-0.25px;left:501.6px;">Average Total Device Cost:</span>
<span id="t129" class="t c" style="top:705.6px;font-size:9px;color:#777;letter-spacing:-0.09px;left:513.6px;">Jul 19</span>
<span id="t130" class="t c" style="top:705.6px;font-size:9px;color:#777;letter-spacing:-0.43px;left:554.2px;">Aug 19</span>
<span id="t131" class="t c" style="top:705.6px;font-size:9px;color:#777;letter-spacing:-0.35px;left:594.8px;">Sep 19</span>
<span id="t132" class="t c" style="top:705.6px;font-size:9px;color:#777;letter-spacing:-0.30px;left:635.8px;">Oct 19</span>
<span id="t133" class="t c" style="top:705.6px;font-size:9px;color:#777;letter-spacing:-0.39px;left:676.8px;">Nov 19</span>
<span id="t134" class="t c" style="top:705.6px;font-size:9px;color:#777;letter-spacing:-0.51px;left:717.3px;">Dec 19</span>
<span id="t135" class="t c" style="top:705.6px;font-size:9px;color:#777;letter-spacing:-0.37px;left:758.8px;">Jan 20</span>
<span id="t136" class="t c" style="top:705.6px;font-size:9px;color:#777;letter-spacing:-0.49px;left:799.4px;">Feb 20</span>
<span id="t137" class="t c" style="top:705.6px;font-size:9px;color:#777;letter-spacing:-0.12px;left:840.5px;">Mar 20</span>
<span id="t138" class="t c" style="top:705.6px;font-size:9px;color:#777;letter-spacing:-0.33px;left:881.4px;">Apr 20</span>
<span id="t139" class="t c" style="top:705.6px;font-size:9px;color:#777;letter-spacing:-0.26px;left:922.5px;">May 20</span>
<span id="t140" class="t c" style="top:705.6px;font-size:9px;color:#777;letter-spacing:-0.43px;left:962.8px;">Jun 20</span>
<span id="t141" class="t" style="top:539.6px;font-size:9px;color:#333;letter-spacing:-0.12px;left:493.6px;">$662.12</span>
<span id="t142" class="t" style="top:544.6px;font-size:9px;color:#333;letter-spacing:-0.12px;left:541.6px;">$632.73</span>
<span id="t143" class="t" style="top:532.0px;font-size:9px;color:#333;letter-spacing:-0.12px;left:582.4px;">$642.66</span>
<span id="t144" class="t" style="top:544.6px;font-size:9px;color:#333;letter-spacing:-0.12px;left:622.0px;">$607.33</span>
<span id="t145" class="t" style="top:532.0px;font-size:9px;color:#333;letter-spacing:-0.12px;left:663.0px;">$640.03</span>
<span id="t146" class="t" style="top:544.6px;font-size:9px;color:#333;letter-spacing:-0.12px;left:687.6px;">$635.25</span>
<span id="t147" class="t" style="top:544.6px;font-size:9px;color:#333;letter-spacing:-0.12px;left:743.6px;">$575.02</span>
<span id="t148" class="t" style="top:544.6px;font-size:9px;color:#333;letter-spacing:-0.12px;left:800.6px;">$637.43</span>
<span id="t149" class="t" style="top:531.6px;font-size:9px;color:#333;letter-spacing:-0.12px;left:823.0px;">$663.20</span>
<span id="t150" class="t" style="top:544.6px;font-size:9px;color:#333;letter-spacing:-0.12px;left:864.4px;">$581.22</span>
<span id="t151" class="t" style="top:531.6px;font-size:9px;color:#333;letter-spacing:-0.12px;left:903.6px;">$682.92</span>
<span id="t152" class="t" style="top:540.6px;font-size:9px;color:#333;letter-spacing:-0.12px;left:951.4px;">$617.37</span>
<span id="t153" class="t" style="top:510.0px;font-size:14.5px;color:#8a8cc2;letter-spacing:-0.45px;left:1058.6px;">00:41</span>
<span id="t154" class="t" style="top:510.0px;font-size:14.5px;color:#4a80ad;letter-spacing:-0.42px;left:1230.0px;">00:59</span>
<span id="t155" class="t" style="top:536.4px;font-size:9px;color:#5a92bd;letter-spacing:-0.23px;left:991.6px;">Avg Facility Usage: 1.00h</span>
<span id="t156" class="t" style="top:595.0px;font-size:9px;color:#a6a6d2;letter-spacing:-0.15px;left:1248.0px;">Avg Procedure: 0.70h</span>
<span id="t157" class="t c" style="top:704.8px;font-size:9px;color:#777;letter-spacing:-0.13px;left:1004.9px;">Jul 19</span>
<span id="t158" class="t c" style="top:704.8px;font-size:9px;color:#777;letter-spacing:-0.43px;left:1061.8px;">Sep 19</span>
<span id="t159" class="t c" style="top:704.8px;font-size:9px;color:#777;letter-spacing:-0.37px;left:1118.8px;">Nov 19</span>
<span id="t160" class="t c" style="top:704.8px;font-size:9px;color:#777;letter-spacing:-0.31px;left:1174.8px;">Jan 20</span>
<span id="t161" class="t c" style="top:704.8px;font-size:9px;color:#777;letter-spacing:-0.08px;left:1231.0px;">Mar 20</span>
<span id="t162" class="t c" style="top:704.8px;font-size:9px;color:#777;letter-spacing:-0.26px;left:1286.9px;">May 20</span>
<span class="t c" style="left:335.6px;top:120.4px;font-size:17.5px;font-weight:700;color:#fff;">?</span>
</body>
</html>
